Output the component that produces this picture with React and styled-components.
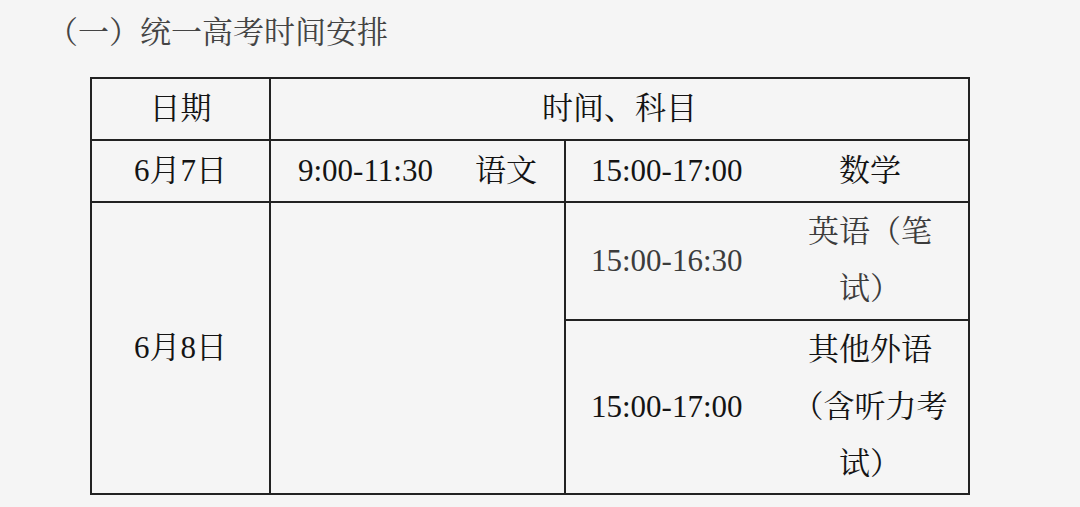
import styled, { createGlobalStyle } from "styled-components";

const GlobalStyle = createGlobalStyle`
  body {
    margin: 0;
    background: #f5f5f5;
    font-family: "Liberation Serif", "Noto Serif CJK SC", "Noto Sans CJK SC", serif;
  }
`;

const Page = styled.div`
  width: 1080px;
  height: 507px;
  padding-top: 13px;
  box-sizing: border-box;
  background: #f5f5f5;
  overflow: hidden;
`;

const Title = styled.h2`
  margin: 0 0 24px 47px;
  height: 40px;
  line-height: 40px;
  font-size: 31px;
  font-weight: normal;
  color: #444;
`;

const Grid = styled.div`
  margin-left: 90px;
  width: 880px;
  box-sizing: border-box;
  display: grid;
  grid-template-columns: 177px 293px 402px;
  grid-template-rows: 60px 60px 116px 172px;
  gap: 2px;
  padding: 2px;
  background: #222;
`;

const Cell = styled.div`
  background: #f5f5f5;
  grid-column: ${(p) => p.$col || "auto"};
  grid-row: ${(p) => p.$row || "auto"};
  display: flex;
  align-items: center;
  justify-content: ${(p) => (p.$left ? "flex-start" : "center")};
  padding-left: ${(p) => p.$pad || 0}px;
  padding-bottom: 2px;
  box-sizing: border-box;
  font-size: 31px;
  line-height: 1;
  color: ${(p) => (p.$muted ? "#3c3c3c" : "#141414")};
  white-space: nowrap;
`;

const Time = styled.span`
  display: inline-block;
`;

const Subject = styled.span`
  display: inline-block;
  margin-left: ${(p) => p.$gap || 0}px;
`;

const SubjectBox = styled.div`
  margin-left: auto;
  margin-right: 18px;
  width: 160px;
  text-align: center;
  line-height: 57px;
  color: ${(p) => (p.$muted ? "#3c3c3c" : "#141414")};
`;

export default function App() {
  return (
    <>
      <GlobalStyle />
      <Page>
        <Title>（一）统一高考时间安排</Title>
        <Grid>
          <Cell $col="1" $row="1">日期</Cell>
          <Cell $col="2 / 4" $row="1">时间、科目</Cell>

          <Cell $col="1" $row="2">6月7日</Cell>
          <Cell $col="2" $row="2" $left $pad={27}>
            <Time>9:00-11:30</Time>
            <Subject $gap={42}>语文</Subject>
          </Cell>
          <Cell $col="3" $row="2" $left $pad={25}>
            <Time>15:00-17:00</Time>
            <SubjectBox>数学</SubjectBox>
          </Cell>

          <Cell $col="1" $row="3 / 5">6月8日</Cell>
          <Cell $col="2" $row="3 / 5" />
          <Cell $col="3" $row="3" $left $pad={25} $muted>
            <Time>15:00-16:30</Time>
            <SubjectBox $muted>
              英语（笔
              <br />
              试）
            </SubjectBox>
          </Cell>
          <Cell $col="3" $row="4" $left $pad={25}>
            <Time>15:00-17:00</Time>
            <SubjectBox>
              其他外语
              <br />
              （含听力考
              <br />
              试）
            </SubjectBox>
          </Cell>
        </Grid>
      </Page>
    </>
  );
}
